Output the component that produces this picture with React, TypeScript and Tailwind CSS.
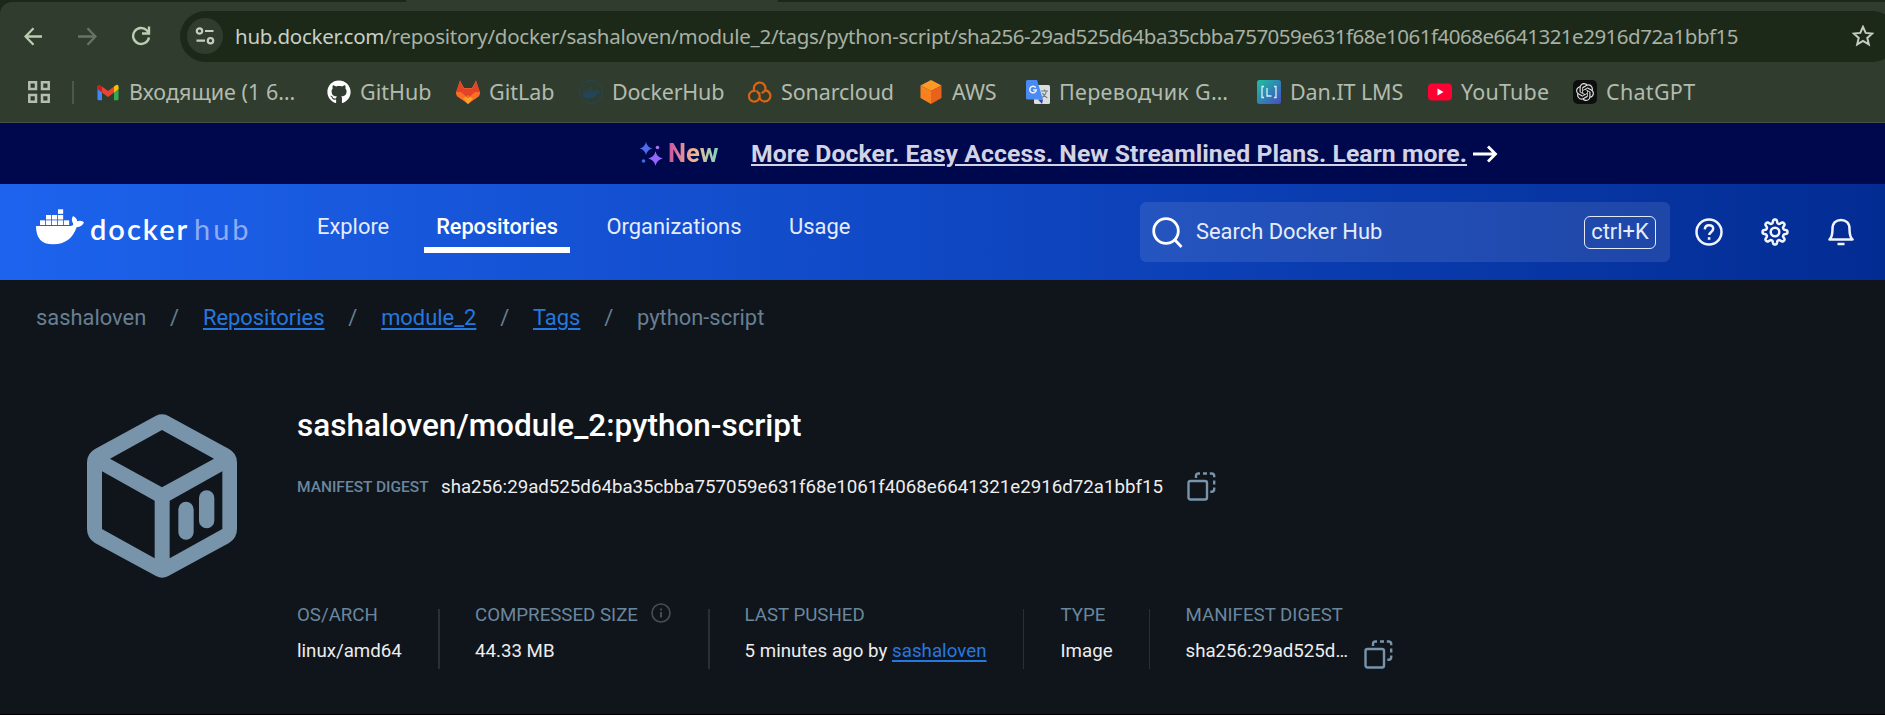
import React from "react";
import { FaGithub, FaDocker } from "react-icons/fa";
import { SiOpenai } from "react-icons/si";

const GmailIcon = () => (
  <svg width="24" height="24" viewBox="0 0 24 24">
    <path d="M1.500 6v13a1.300 1.300 0 0 0 1.300 1.300H6V10z" fill="#4285f4" />
    <path d="M22.500 6v13a1.300 1.300 0 0 1-1.300 1.300H18V10z" fill="#34a853" />
    <path d="M18 6.500 20 5q2.500-1 2.500 2v2L18 12.500z" fill="#fbbc04" />
    <path d="M6 6.500 4 5Q1.500 4 1.500 7v2L6 12.500z" fill="#c5221f" />
    <path d="M6 6.500 12 11l6-4.500v6L12 17l-6-4.500z" fill="#ea4335" />
  </svg>
);

const GitlabIcon = () => (
  <svg width="24" height="24" viewBox="0 0 24 24">
    <path d="M0 13 4 .5 8 8h8l4-7.500L24 13l-1 3-11 8L1 16z" fill="#fc6d26" />
    <path d="M12 24 6 17.500 12 14l6 3.500z" fill="#fca326" />
    <path d="M0 12 4 .500 7.500 8.500h9L20 .500 24 12l-3 .5-9 5.500-9-5.500z" fill="#e24329" />
    <path d="M0 12.500 5 12l7 6 7-6 5 .5-1 3.500-5 3.500-6-4.500-6 4.500L1 16z" fill="#fc6d26" />
  </svg>
);

const DockerBadge = () => (
  <span className="flex size-6 items-center justify-center rounded-full border-[1.5px] border-[#24445a] text-[#1f4661]">
    <FaDocker size={17} />
  </span>
);

const SonarIcon = () => (
  <svg width="25" height="24" viewBox="0 0 25 24" fill="none" stroke="#dc6413" strokeWidth="2.300" strokeLinecap="round">
    <path d="M6.800 10.800A6 6 0 1 1 18 9.500c-.5 1.500-1.500 2.600-3 3.200" />
    <path d="M6.800 10.800a5.600 5.600 0 1 0 4.700 8.200c1-2 .8-4-.5-5.600" />
    <path d="M18.500 10.300a5.800 5.800 0 1 1-6 8.700" />
    <path d="M9.500 11.500c.5 1 1.500 1.700 2.500 1.900" />
  </svg>
);

const AwsIcon = () => (
  <svg width="24" height="24" viewBox="0 0 24 24">
    <path d="M12 0 22.500 5.500 12 11 1.500 5.500z" fill="#fd9827" />
    <path d="M1.500 5.500 12 11v13L1.500 18z" fill="#f8801f" />
    <path d="M22.500 5.500 12 11v13l10.500-6z" fill="#ea611c" />
  </svg>
);

const TranslateIcon = () => (
  <svg width="24" height="24" viewBox="0 0 24 24">
    <rect x="8" y="5" width="16" height="19" rx="1.500" fill="#dcdfe0" />
    <path d="m12 19.500 4 4.500 1-4.500z" fill="#3b3fa8" />
    <path d="M1.500 0H11l6 19.500H1.500A1.500 1.500 0 0 1 0 18V1.500A1.500 1.500 0 0 1 1.500 0z" fill="#4a8af4" />
    <path d="M9.700 7.600A3.300 3.300 0 1 0 10.300 10H7.200" fill="none" stroke="#eef3fd" strokeWidth="1.500" />
    <path d="M15 11h7M18.500 9.500V11M20.500 11q-.8 4-4.200 6.500M16.500 13q1.300 3.200 4.800 5" fill="none" stroke="#6e7f86" strokeWidth="1.200" />
  </svg>
);

const DanIcon = () => (
  <svg width="24" height="24" viewBox="0 0 24 24">
    <defs>
      <linearGradient id="dan" x1="0" y1="0" x2="1" y2="1">
        <stop offset="0" stopColor="#21c0a0" />
        <stop offset=".5" stopColor="#2e86b4" />
        <stop offset="1" stopColor="#4c4cc0" />
      </linearGradient>
    </defs>
    <rect width="24" height="24" rx="2.500" fill="url(#dan)" />
    <path d="M7 6.500H5v11h2M17 6.500h2v11h-2M10 8v8h4.500" fill="none" stroke="#d6f1f5" strokeWidth="1.300" />
  </svg>
);

const YoutubeIcon = () => (
  <svg width="24" height="24" viewBox="0 0 24 24">
    <rect y="3.500" width="24" height="17" rx="4" fill="#ff0033" />
    <path d="m9.500 8.500 6 3.500-6 3.500z" fill="#fff" />
  </svg>
);

const ChatIcon = () => (
  <span className="flex size-6 items-center justify-center rounded-[5px] bg-[#0d0e0e] text-[#dcdcdc]">
    <SiOpenai size={18} />
  </span>
);

const bookmarks = [
  { icon: <GmailIcon />, label: "Входящие (1 6…", box: "w-[231px]", text: "tracking-[0.02px]" },
  { icon: <FaGithub size={24} color="#fff" />, label: "GitHub", box: "w-[129px]", text: "" },
  { icon: <GitlabIcon />, label: "GitLab", box: "w-[123px]", text: "" },
  { icon: <DockerBadge />, label: "DockerHub", box: "w-[169px]", text: "tracking-[-0.2px]" },
  { icon: <SonarIcon />, label: "Sonarcloud", box: "w-[171px]", text: "tracking-[-0.1px]" },
  { icon: <AwsIcon />, label: "AWS", box: "w-[107px]", text: "" },
  { icon: <TranslateIcon />, label: "Переводчик G…", box: "w-[231px]", text: "tracking-[0.3px]" },
  { icon: <DanIcon />, label: "Dan.IT LMS", box: "w-[171px]", text: "tracking-[-0.1px]" },
  { icon: <YoutubeIcon />, label: "YouTube", box: "w-[145px]", text: "tracking-[0.2px]" },
  { icon: <ChatIcon />, label: "ChatGPT", box: "w-[160px]", text: "tracking-[0.3px]" },
];

function Browser() {
  return (
    <header className="flex h-[123px] flex-col border-b border-[#4a5149] bg-[#1a2817] font-['Noto_Sans',sans-serif] text-[#b3bbae]">
      <div className="flex h-[2px] shrink-0">
        <span className="w-[406px]" />
        <span className="w-[372px] bg-[#303d2e]" />
      </div>
      <div className="flex h-[120px] flex-col rounded-tl-xl bg-[#303d2e]">
        <div className="flex h-[68px] shrink-0 items-center overflow-hidden">
          <svg className="ml-6 shrink-0" width="19" height="19" viewBox="0 0 19 19" fill="none" stroke="#b9cdb0" strokeWidth="2.300">
            <path d="M18 9.500H2M9.500 1.300 1.500 9.500l8 8.200" />
          </svg>
          <svg className="ml-[35px] shrink-0" width="19" height="19" viewBox="0 0 19 19" fill="none" stroke="#687463" strokeWidth="2.300">
            <path d="M0 9.500h17M9.500 1.300l8 8.200-8 8.200" />
          </svg>
          <svg className="ml-[34px] shrink-0" width="20" height="20" viewBox="0 0 20 20" fill="none" stroke="#b9cdb0" strokeWidth="2.400">
            <path d="M18 11.500A8 8 0 1 1 16 4.500L17.500 6.500" />
            <path d="M18 .500V7.500H11" />
          </svg>
          <div className="ml-[29px] flex h-[51px] w-[1718px] shrink-0 items-center rounded-full bg-[#1c2919] pl-[7px]">
            <span className="flex size-9 items-center justify-center rounded-full bg-[#303d2e]">
              <svg width="20" height="18" viewBox="0 0 20 18" fill="none" stroke="#c6ccc0" strokeWidth="2.200">
                <circle cx="4.500" cy="4" r="2.700" />
                <path d="M10 4h8.500M1.500 13.700h8.500" />
                <circle cx="15.500" cy="13.700" r="2.700" />
              </svg>
            </span>
            <span className="ml-3 w-[1616px] shrink-0 text-[20.5px] whitespace-nowrap text-[#a8b0a4]">
              <span className="tracking-[-0.26px]">
                <span className="text-[#c9cfc5]">hub.docker.com</span>/repository/docker/sashaloven/module_2/tags/python-script/
              </span>
              <span className="tracking-[-0.5px]">sha256-29ad525d64ba35cbba757059e631f68e1061f4068e6641321e2916d72a1bbf15</span>
            </span>
            <svg className="ml-px shrink-0" width="22" height="22" viewBox="0 0 22 22" fill="none" stroke="#c6ccc0" strokeWidth="2">
              <path d="m11 1.800 2.700 6.100 6.600.6-5 4.400 1.500 6.500-5.800-3.500L5.200 19.400l1.500-6.500-5-4.400 6.600-.6z" />
            </svg>
          </div>
        </div>
        <div className="flex h-[44px] items-center text-[21.500px] whitespace-nowrap">
          <svg className="ml-7 shrink-0" width="22" height="22" viewBox="0 0 22 22" fill="none" stroke="#b6beb0" strokeWidth="2.500">
            <path d="M1.300 1.300h6.700v6.700H1.300zM14 1.300h6.700v6.700H14zM1.300 14h6.700v6.700H1.300zM14 14h6.700v6.700H14z" />
          </svg>
          <span className="ml-[22px] h-[23px] w-[2px] bg-[#4b5a47]" />
          <nav className="ml-[22px] flex">
            {bookmarks.map((b) => (
              <a key={b.label} className={`flex shrink-0 items-center gap-[9px] ${b.box}`}>
                <span className="flex w-6 shrink-0 justify-center">{b.icon}</span>
                <span className={b.text}>{b.label}</span>
              </a>
            ))}
          </nav>
        </div>
      </div>
    </header>
  );
}

const star = (x: number, y: number, r: number) =>
  `M${x} ${y - r}Q${x + r * 0.18} ${y - r * 0.18} ${x + r} ${y}Q${x + r * 0.18} ${y + r * 0.18} ${x} ${y + r}Q${x - r * 0.18} ${y + r * 0.18} ${x - r} ${y}Q${x - r * 0.18} ${y - r * 0.18} ${x} ${y - r}z`;

function Banner() {
  return (
    <div className="flex h-[61px] items-center bg-[#00084d] text-[#d3d3e4]">
      <svg className="ml-[639px] shrink-0" width="24" height="26" viewBox="0 0 24 26">
        <path d={star(7, 7.5, 6.5)} fill="#4d6df0" />
        <path d={star(16.5, 17.5, 7.3)} fill="#9567fb" />
        <circle cx="18.500" cy="6.500" r="1.800" fill="#b070ee" />
        <circle cx="4.500" cy="20" r="1.800" fill="#3f6fe0" />
      </svg>
      <span className="ml-[5px] w-[83px] shrink-0">
        <span className="bg-linear-to-r from-[#c74fa0] via-[#f3b58c] to-[#6fd6c4] bg-clip-text text-[25.500px] font-bold text-transparent">New</span>
      </span>
      <a className="mt-px w-[722px] text-[24.75px] leading-[30px] font-bold tracking-[0.06px] whitespace-nowrap underline decoration-2 underline-offset-2">
        More Docker. Easy Access. New Streamlined Plans. Learn more.
      </a>
      <svg width="25" height="18" viewBox="0 0 25 18" fill="none" stroke="#fff" strokeWidth="2.800">
        <path d="M0 9h22M15 1.500 22.500 9 15 16.500" />
      </svg>
    </div>
  );
}

const Logo = () => (
  <div className="flex items-center">
    <svg width="48" height="36" viewBox="108 88 144 108" fill="#fff">
      <path d="M108 139H211Q222 138 219 131Q212 121 219 109Q230 114 232 125Q242 121 252 128Q247 142 230 143Q212 194 160 194Q108 195 108 139z" />
      {[120, 138, 156, 174, 192].map((x) => (
        <rect key={x} x={x} y="122" width="15.500" height="14" />
      ))}
      {[138, 156, 174].map((x) => (
        <rect key={x} x={x} y="106" width="15.500" height="13.500" />
      ))}
      <rect x="174" y="89" width="15.500" height="13.500" />
    </svg>
    <span className="mt-[3px] ml-[6px] w-[104px] font-['Lato',sans-serif] text-[29px] leading-[36px] font-semibold tracking-[2px] text-white">docker</span>
    <span className="mt-[3px] font-['Lato',sans-serif] text-[29px] leading-[36px] tracking-[3px] text-[#8eabf4]">hub</span>
  </div>
);

const gearPath =
  Array.from({ length: 160 }, (_, i) => {
    const a = (i / 160) * Math.PI * 2;
    const r = 10.7 + 1.8 * Math.tanh(2 * Math.cos(8 * a));
    return `${i ? "L" : "M"}${(14 + r * Math.sin(a)).toFixed(2)} ${(14 - r * Math.cos(a)).toFixed(2)}`;
  }).join("") + "z";

function Nav() {
  return (
    <div className="flex h-[96px] shrink-0 items-center bg-linear-[90deg,#1d63ed_0%,#1049c6_47%,#032c93_100%] pl-9 text-[21.9px] text-[#e6ecfb]">
      <div className="mt-[-10px] w-[281px] shrink-0">
        <Logo />
      </div>
      <nav className="flex w-[823px] shrink-0 items-start">
        <span className="w-[107px]">Explore</span>
        <span className="w-[146px] text-center font-medium text-white">
          <span className="text-[21.700px]">Repositories</span>
          <span className="mt-[4px] block h-[6px] bg-white" />
        </span>
        <span className="ml-[36.500px] w-[182.500px]">Organizations</span>
        <span>Usage</span>
      </nav>
      <div className="flex h-[60px] w-[530px] shrink-0 items-center rounded-md bg-white/10 pl-3">
        <svg className="shrink-0" width="31" height="31" viewBox="0 0 31 31" fill="none" stroke="#fff" strokeWidth="2.800">
          <circle cx="14" cy="14" r="12.300" />
          <path d="m22.500 22.500 7 7.500" />
        </svg>
        <span className="ml-[13px] w-[388px] shrink-0">Search Docker Hub</span>
        <kbd className="flex h-[33px] w-[72px] items-center justify-center rounded-[6px] border-[1.5px] border-[#e3eafb] font-['Roboto',sans-serif]">ctrl+K</kbd>
      </div>
      <svg className="ml-[25px] shrink-0" width="28" height="28" viewBox="0 0 28 28" fill="none" stroke="#f1f4fc" strokeWidth="2.500">
        <circle cx="14" cy="14" r="12.500" />
        <path d="M9.800 11.300c.2-2.600 2-4 4.200-4 2.500 0 4.200 1.500 4.200 3.500 0 3-4 3.200-4 6.200" />
        <path d="M12.800 20.500h2.600" strokeWidth="2.600" />
      </svg>
      <svg className="ml-[38px] shrink-0" width="28" height="28" viewBox="0 0 28 28" fill="none" stroke="#f1f4fc" strokeWidth="2.500" strokeLinejoin="round">
        <path d={gearPath} />
        <circle cx="14" cy="14" r="4.300" />
      </svg>
      <svg className="ml-[39px] shrink-0" width="26" height="28" viewBox="0 0 26 28" fill="none" stroke="#f1f4fc" strokeWidth="2.500" strokeLinejoin="round">
        <path d="M1.500 21.500q3-2.500 3-10.500C4.500 5 8 2 13 2s8.500 3 8.500 9q0 8 3 10.500z" />
        <path d="M9.500 26h7" strokeWidth="2.500" />
      </svg>
    </div>
  );
}

const CopyIcon = ({ className = "" }: { className?: string }) => (
  <svg className={`shrink-0 ${className}`} width="29" height="29" viewBox="0 0 29 29" fill="none" stroke="#7794ab" strokeWidth="2.400">
    <rect x="1.500" y="9" width="18.500" height="18.500" rx="2" />
    <path d="M9 6V4Q9 1.500 11.500 1.500H13M16 1.500h4M22.800 1.500h1.700Q27.200 1.500 27.200 4v1.200M27.200 8.500v4M27.200 15.500v1.800q0 2.500-2.700 2.500h-1.200" />
  </svg>
);

const Slash = () => <span>/</span>;
const linkClass = "text-[#2478e0] underline decoration-2 underline-offset-[3px]";

const Divider = ({ className }: { className: string }) => <span className={`mt-[4px] h-[60px] w-[1.5px] shrink-0 bg-[#2c2f31] ${className}`} />;

function Stat({ label, className, children }: { label: React.ReactNode; className: string; children: React.ReactNode }) {
  return (
    <div className={`flex shrink-0 flex-col ${className}`}>
      <div className="flex h-5 items-center text-[#6a879e]">{label}</div>
      <div className="mt-4 flex h-5 items-center text-[#ededee]">{children}</div>
    </div>
  );
}

export default function App() {
  return (
    <div className="flex h-[715px] w-[1885px] flex-col overflow-hidden border-b border-black bg-[#10151b] font-['Roboto',sans-serif]">
      <Browser />
      <Banner />
      <Nav />
      <main className="flex flex-col">
        <div className="mt-[21px] flex h-[34px] items-center gap-[23.8px] pl-9 text-[21.9px] text-[#677f92]">
          <span>sashaloven</span>
          <Slash />
          <a className={linkClass}>Repositories</a>
          <Slash />
          <a className={linkClass}>module_2</a>
          <Slash />
          <a className={linkClass}>Tags</a>
          <Slash />
          <span>python-script</span>
        </div>
        <div className="mt-[71px] flex pl-[87px]">
          <svg className="mt-[8px] shrink-0" width="150" height="164" viewBox="81 70 450 492" fill="#7794ab">
            <path
              fillRule="evenodd"
              d="M81 215Q81 188 105 175L288 75Q306 67 324 75L507 175Q531 188 531 215V415Q531 442 507 457L325 556Q306 566 288 556L105 457Q81 442 81 415zM306 118 462 204 306 290 150 204zM126 242 284 330V503L126 415zM487 242V415L329 503V330z"
            />
            <rect x="355" y="333" width="46" height="114" rx="23" />
            <rect x="417" y="299" width="46" height="114" rx="23" />
          </svg>
          <div className="ml-[60px] flex flex-col">
            <h1 className="h-10 text-[31.500px] leading-10 font-medium text-white">sashaloven/module_2:python-script</h1>
            <div className="mt-[26px] flex h-[29px] items-center">
              <span className="mt-[2px] w-[144px] text-[15.500px] font-medium text-[#6a879e]">MANIFEST DIGEST</span>
              <span className="mt-[2px] w-[746px] text-[18.700px] whitespace-nowrap text-[#ededee]">
                sha256:29ad525d64ba35cbba757059e631f68e1061f4068e6641321e2916d72a1bbf15
              </span>
              <CopyIcon />
            </div>
            <div className="mt-[104px] flex text-[18.700px] whitespace-nowrap">
              <Stat label="OS/ARCH" className="w-[141px]">linux/amd64</Stat>
              <Divider className="mr-[35.500px]" />
              <Stat
                className="w-[233px]"
                label={
                  <>
                    COMPRESSED SIZE
                    <svg className="mt-[-5px] ml-[13px]" width="20" height="20" viewBox="0 0 20 20" fill="none" stroke="#4a4d50" strokeWidth="1.600">
                      <circle cx="10" cy="10" r="9" />
                      <path d="M10 9v5.500M10 5.500v2" strokeWidth="2" />
                    </svg>
                  </>
                }
              >
                44.33 MB
              </Stat>
              <Divider className="mr-[35px]" />
              <Stat label="LAST PUSHED" className="w-[278px]">
                <span className="tracking-[0.04px]">
                  5 minutes ago by <a className={linkClass}>sashaloven</a>
                </span>
              </Stat>
              <Divider className="mr-[36.500px]" />
              <Stat label="TYPE" className="w-[88px]">Image</Stat>
              <Divider className="mr-[35.500px]" />
              <Stat label="MANIFEST DIGEST" className="w-[220px]">
                <span className="w-[178px] shrink-0">sha256:29ad525d…</span>
                <CopyIcon className="mt-[6px]" />
              </Stat>
            </div>
          </div>
        </div>
      </main>
    </div>
  );
}
